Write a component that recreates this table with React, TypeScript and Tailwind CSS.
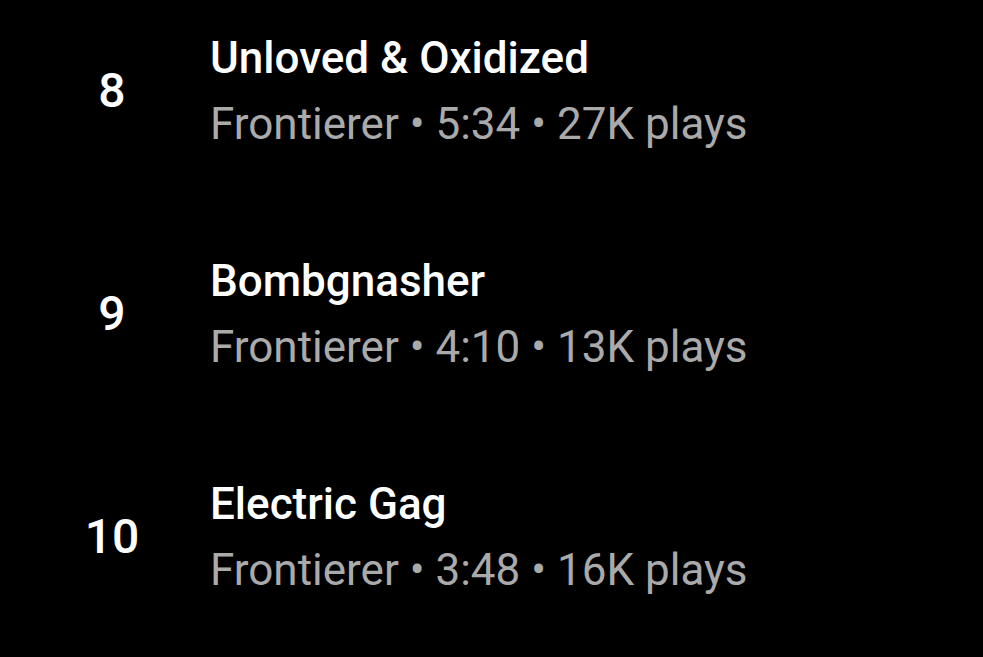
const tracks = [
  { n: 8, title: "Unloved & Oxidized", length: "5:34", plays: "27K" },
  { n: 9, title: "Bombgnasher", length: "4:10", plays: "13K" },
  { n: 10, title: "Electric Gag", length: "3:48", plays: "16K" },
];

export default function App() {
  return (
    <div className="w-[983px] h-[657px] overflow-hidden bg-black font-['Roboto',sans-serif]">
      <div className="flex flex-col gap-[105px] pt-[32px]">
        {tracks.map((t) => (
          <div key={t.n} className="flex items-center">
            <div className="ml-[64px] w-[96px] text-center text-[48px] font-medium leading-[52px] text-white">
              {t.n}
            </div>
            <div className="ml-[50px] flex flex-col gap-[14px]">
              <div className="text-[44px] font-medium leading-[52px] text-white">{t.title}</div>
              <div className="text-[44px] leading-[52px] text-[#aaaaaa]">
                Frontierer • {t.length} • {t.plays} plays
              </div>
            </div>
          </div>
        ))}
      </div>
    </div>
  );
}
